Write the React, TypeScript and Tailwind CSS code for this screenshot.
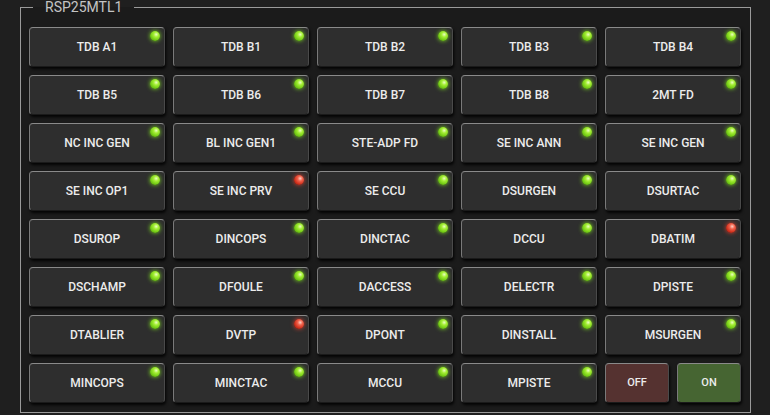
import React from 'react';

type Cell = { label: string; led: 'green' | 'red' };

const cells: Cell[] = [
    { label: 'TDB A1', led: 'green' },
    { label: 'TDB B1', led: 'green' },
    { label: 'TDB B2', led: 'green' },
    { label: 'TDB B3', led: 'green' },
    { label: 'TDB B4', led: 'green' },
    { label: 'TDB B5', led: 'green' },
    { label: 'TDB B6', led: 'green' },
    { label: 'TDB B7', led: 'green' },
    { label: 'TDB B8', led: 'green' },
    { label: '2MT FD', led: 'green' },
    { label: 'NC INC GEN', led: 'green' },
    { label: 'BL INC GEN1', led: 'green' },
    { label: 'STE-ADP FD', led: 'green' },
    { label: 'SE INC ANN', led: 'green' },
    { label: 'SE INC GEN', led: 'green' },
    { label: 'SE INC OP1', led: 'green' },
    { label: 'SE INC PRV', led: 'red' },
    { label: 'SE CCU', led: 'green' },
    { label: 'DSURGEN', led: 'green' },
    { label: 'DSURTAC', led: 'green' },
    { label: 'DSUROP', led: 'green' },
    { label: 'DINCOPS', led: 'green' },
    { label: 'DINCTAC', led: 'green' },
    { label: 'DCCU', led: 'green' },
    { label: 'DBATIM', led: 'red' },
    { label: 'DSCHAMP', led: 'green' },
    { label: 'DFOULE', led: 'green' },
    { label: 'DACCESS', led: 'green' },
    { label: 'DELECTR', led: 'green' },
    { label: 'DPISTE', led: 'green' },
    { label: 'DTABLIER', led: 'green' },
    { label: 'DVTP', led: 'red' },
    { label: 'DPONT', led: 'green' },
    { label: 'DINSTALL', led: 'green' },
    { label: 'MSURGEN', led: 'green' },
    { label: 'MINCOPS', led: 'green' },
    { label: 'MINCTAC', led: 'green' },
    { label: 'MCCU', led: 'green' },
    { label: 'MPISTE', led: 'green' },
];

// status lamp in the top-right corner of each button
const Led: React.FC<{ color: 'green' | 'red' }> = ({ color }) => (
    <span
        className={`absolute top-[3px] right-[4px] w-[10px] h-[10px] rounded-full ${
            color === 'green'
                ? 'bg-[radial-gradient(circle_at_62%_35%,#eaffc0_0%,#a4ee34_28%,#74cc16_60%,#427e08_100%)] shadow-[0_0_4px_#7fdc20]'
                : 'bg-[radial-gradient(circle_at_62%_35%,#ffd0c4_0%,#f2624c_28%,#d2321e_60%,#7a1208_100%)] shadow-[0_0_4px_#e04030]'
        }`}
    />
);

const btnBase =
    'relative flex items-center justify-center h-[40px] rounded-[4px] border border-t-[#8a8a8a] border-l-[#7a7a7a] border-r-[#4a4a4a] border-b-[#1a1a1a] shadow-[1px_2px_3px_rgba(0,0,0,0.9)] text-[#ececec] font-medium';

export default function App() {
    return (
        <div className="w-[770px] h-[415px] bg-[#1f1f1f] font-['Roboto',sans-serif] overflow-hidden">
            <fieldset className="ml-[20px] w-[731px] border border-[#9a9a9a] bg-[#1b1b1b] pl-2 pt-[13px] pb-[9px]">
                <legend className="ml-1 px-3 text-[14px] leading-[14px] text-[#c4c4c4]">RSP25MTL1</legend>
                <div className="grid grid-cols-[repeat(5,136px)] gap-2">
                    {cells.map((c) => (
                        <button key={c.label} className={`${btnBase} bg-[#2e2e2e] text-[12px]`}>
                            {c.label}
                            <Led color={c.led} />
                        </button>
                    ))}
                    <div className="flex gap-2">
                        <button className={`${btnBase} w-[64px] bg-[#553230] text-[11px]`}>OFF</button>
                        <button className={`${btnBase} w-[64px] bg-[#466532] text-[11px]`}>ON</button>
                    </div>
                </div>
            </fieldset>
        </div>
    );
}
